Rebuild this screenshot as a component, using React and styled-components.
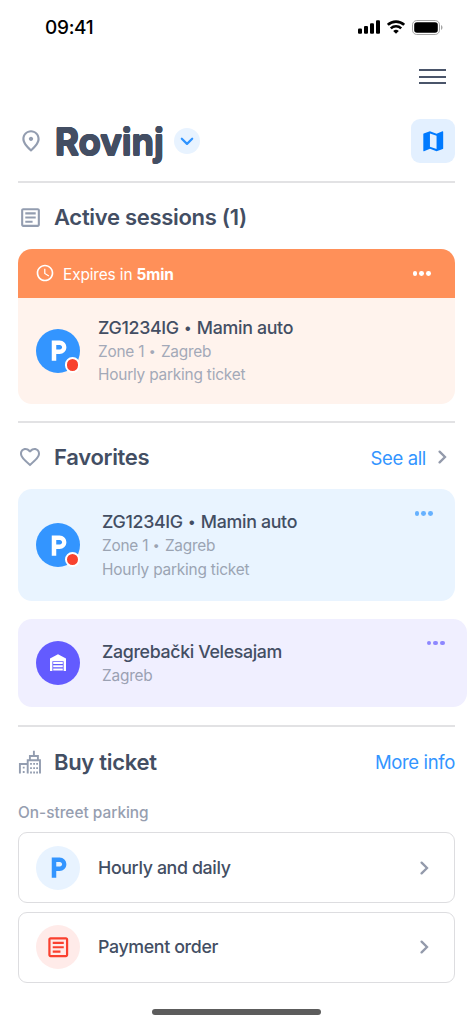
import React from 'react'
import styled, { createGlobalStyle } from 'styled-components'
import {
  MdAccessTime,
  MdFavoriteBorder,
  MdLocalParking,
  MdMap,
  MdOutlineArticle,
  MdOutlinePlace
} from 'react-icons/md'

const GlobalStyle = createGlobalStyle`
  * {
    box-sizing: border-box;
  }
  body {
    margin: 0;
    background: #fff;
    font-family: Inter, 'Liberation Sans', sans-serif;
    color: #434e63;
  }
  svg {
    display: block;
    flex: none;
  }
`

const Screen = styled.div`
  width: 473px;
  height: 1024px;
  padding: 0 18px;
  overflow: hidden;
  display: flex;
  flex-direction: column;
  background: #fff;
`

const StatusBar = styled.div`
  height: 54px;
  padding: 0 12px 0 27px;
  display: flex;
  align-items: center;
  justify-content: space-between;
  color: #000;
`

const StatusIcons = styled.div`
  display: flex;
  align-items: center;
  gap: 7px;
`

const Label = styled.span`
  padding-top: ${(props) => props.$drop || 0}px;
  font-size: ${(props) => props.$size}px;
  font-weight: ${(props) => props.$weight || 400};
  line-height: ${(props) => props.$line || 24}px;
  letter-spacing: ${(props) => props.$track || 0}px;
  color: ${(props) => props.$color || '#434e63'};
  white-space: nowrap;
`

const Bullet = styled.i`
  display: inline-block;
  font-style: normal;
  transform: scale(0.8);
`

const MenuRow = styled.div`
  height: 45px;
  padding-right: 9px;
  display: flex;
  align-items: center;
  justify-content: flex-end;
`

const MenuButton = styled.div`
  width: 27px;
  height: 15px;
  display: flex;
  flex-direction: column;
  justify-content: space-between;
`

const MenuLine = styled.i`
  height: 2px;
  background: #4a556a;
`

const CityRow = styled.div`
  height: 44px;
  margin-top: 20px;
  display: flex;
  align-items: center;
`

const IconSlot = styled.div`
  width: 36px;
  color: #939db0;
  display: flex;
  align-items: center;
`

/* the ring of shadows rounds off the letter corners */
const CityName = styled.h1`
  margin: 0 10px 0 1px;
  padding-top: 1px;
  font-size: 36.5px;
  line-height: 44px;
  font-weight: 600;
  letter-spacing: 0.2px;
  text-shadow:
    0.9px 0 #434e63,
    -0.9px 0 #434e63,
    0 0.9px #434e63,
    0 -0.9px #434e63,
    0.65px 0.65px #434e63,
    -0.65px 0.65px #434e63,
    0.65px -0.65px #434e63,
    -0.65px -0.65px #434e63;
`

const Dropdown = styled.div`
  width: 26px;
  height: 26px;
  border-radius: 50%;
  background: #e8f3ff;
  color: #2e93ff;
  display: flex;
  align-items: center;
  justify-content: center;
`

const MapButton = styled.div`
  width: 44px;
  height: 44px;
  margin-left: auto;
  border-radius: 9px;
  background: #e3f0ff;
  color: #007aff;
  display: flex;
  align-items: center;
  justify-content: center;
`

const Divider = styled.div`
  flex: none;
  height: 2px;
  margin-top: ${(props) => props.$top}px;
  background: #e2e2e4;
`

const SectionHead = styled.div`
  height: ${(props) => props.$height}px;
  padding-top: ${(props) => props.$drop || 0}px;
  display: flex;
  align-items: center;
`

const HeadLink = styled.div`
  margin-left: auto;
  padding-right: ${(props) => props.$inset || 0}px;
  display: flex;
  align-items: center;
  gap: 12px;
  color: #939aab;
`

const Card = styled.div`
  flex: none;
  width: ${(props) => props.$width || 437}px;
  height: ${(props) => props.$height}px;
  margin-bottom: ${(props) => props.$bottom || 0}px;
  border-radius: 14px;
  overflow: hidden;
  background: ${(props) => props.$tint};
`

const ExpiryBar = styled.div`
  height: 48.5px;
  padding: 0 24px 0 17px;
  display: flex;
  align-items: center;
  gap: 8px;
  background: #ff9059;
  color: #fff;
`

const CardBody = styled.div`
  height: ${(props) => props.$height}px;
  padding: 0 22px 0 18px;
  display: flex;
  align-items: center;
  gap: ${(props) => props.$gap}px;
`

const CardText = styled.div`
  display: flex;
  flex-direction: column;
`

const Dots = styled.div`
  margin-left: auto;
  margin-top: ${(props) => props.$top || 0}px;
  align-self: ${(props) => (props.$top ? 'flex-start' : 'center')};
  display: flex;
  gap: 2px;
  color: ${(props) => props.$color};
`

const Dot = styled.i`
  width: 4.8px;
  height: 4.8px;
  border-radius: 50%;
  background: currentColor;
`

const Avatar = styled.div`
  position: relative;
  flex: none;
  width: 44px;
  height: 44px;
  border-radius: 50%;
  background: ${(props) => props.$fill};
  color: ${(props) => props.$color || '#fff'};
  display: flex;
  align-items: center;
  justify-content: center;
`

const Badge = styled.i`
  position: absolute;
  right: 0;
  bottom: 0;
  width: 15.5px;
  height: 15.5px;
  border: 2px solid #fff;
  border-radius: 50%;
  background: #f8432f;
`

const GroupLabel = styled.div`
  height: 36px;
  padding-bottom: 3px;
  display: flex;
  align-items: center;
`

const TicketOption = styled.div`
  flex: none;
  height: 71px;
  margin-bottom: 8.5px;
  padding: 0 25px 0 17px;
  border: 1px solid #dddde0;
  border-radius: 9px;
  display: flex;
  align-items: center;
  gap: 18px;
  color: #939aab;
`

const Push = styled.div`
  margin-left: auto;
`

const HomeIndicator = styled.div`
  flex: none;
  width: 169px;
  height: 5.5px;
  margin: 18px auto 0;
  border-radius: 3px;
  background: #5c5c5c;
`

const SignalIcon = () => (
  <svg width="22" height="14" viewBox="0 0 22 14">
    <rect x="0" y="8.6" width="4" height="5.2" rx="1.1" />
    <rect x="6" y="6" width="4" height="7.8" rx="1.1" />
    <rect x="12" y="3.2" width="4" height="10.6" rx="1.1" />
    <rect x="18" y="0.2" width="4" height="13.6" rx="1.1" />
  </svg>
)

const WifiIcon = () => (
  <svg width="18" height="14" viewBox="0 0 18 14" fill="none" stroke="#000">
    <path d="M.8 4.9a11.8 11.8 0 0 1 16.4 0" strokeWidth="2.7" />
    <path d="M3.8 8.3a7.5 7.5 0 0 1 10.4 0" strokeWidth="2.5" />
    <path d="M9 13.8 6.2 11a4 4 0 0 1 5.6 0z" fill="#000" stroke="none" />
  </svg>
)

const BatteryIcon = () => (
  <svg width="31" height="15" viewBox="0 0 31 15">
    <rect x=".5" y=".5" width="27" height="14" rx="4.3" fill="none" stroke="#a5a5a5" />
    <rect x="2.2" y="2.2" width="23.6" height="10.6" rx="2.8" />
    <path d="M29 5v5c.9-.4 1.5-1.4 1.5-2.5S29.9 5.4 29 5z" fill="#a5a5a5" />
  </svg>
)

const ChevronRight = () => (
  <svg width="9" height="14" viewBox="0 0 9 14" fill="none">
    <path
      d="M1.6 1.6 7 7l-5.4 5.4"
      stroke="currentColor"
      strokeWidth="2.3"
      strokeLinecap="round"
    />
  </svg>
)

const ChevronDown = () => (
  <svg width="14" height="9" viewBox="0 0 14 9" fill="none">
    <path
      d="M1.8 1.7 7 6.9l5.2-5.2"
      stroke="currentColor"
      strokeWidth="2.2"
      strokeLinecap="round"
      strokeLinejoin="round"
    />
  </svg>
)

const GarageIcon = () => (
  <svg width="16" height="17" viewBox="0 0 16 17" fill="none">
    <path d="M0 17V4.5L8 .3l8 4.2V17h-2.4V7.2H2.4V17z" fill="currentColor" />
    <path
      d="M3.2 9.1h9.6M3.2 12.3h9.6M3.2 15.6h9.6"
      stroke="currentColor"
      strokeWidth="2"
    />
  </svg>
)

const CityIcon = () => (
  <svg width="23" height="24" viewBox="0 0 23 24" fill="none" stroke="currentColor">
    <path d="M1.9 23.5V14h7.5" strokeWidth="1.9" />
    <path d="M9.7 23.5V10.3H22v13.2" strokeWidth="1.9" />
    <path d="M11.9 10V6h8v4M15.9 6V.8" strokeWidth="1.9" />
    <path
      d="M5.7 16.8v7M13 13v10.8M16.100 13v10.8M19.100 13v10.8"
      strokeWidth="1.8"
      strokeDasharray="1.8 2.5"
    />
  </svg>
)

const MoreDots = (props) => (
  <Dots $color={props.color} $top={props.top}>
    <Dot />
    <Dot />
    <Dot />
  </Dots>
)

const ParkingTicket = (props) => (
  <>
    <Avatar $fill="#3395ff">
      <MdLocalParking size={27} />
      <Badge />
    </Avatar>
    <CardText>
      <Label $size={17.8} $line={25} $weight={450} $track={-0.32}>
        ZG1234IG <Bullet>•</Bullet> Mamin auto
      </Label>
      <Label $size={15.4} $line={23.5} $track={-0.22} $color={props.muted}>
        Zone 1 <Bullet>•</Bullet> Zagreb
      </Label>
      <Label $size={15.4} $line={23.5} $track={-0.2} $color={props.muted}>
        Hourly parking ticket
      </Label>
    </CardText>
  </>
)

const App = () => (
  <>
    <GlobalStyle />
    <Screen>
      <StatusBar>
        <Label $size={19} $drop={2} $weight={500} $track={-0.3} $color="#000">
          09:41
        </Label>
        <StatusIcons>
          <SignalIcon />
          <WifiIcon />
          <BatteryIcon />
        </StatusIcons>
      </StatusBar>
      <MenuRow>
        <MenuButton>
          <MenuLine />
          <MenuLine />
          <MenuLine />
        </MenuButton>
      </MenuRow>

      <CityRow>
        <IconSlot>
          <MdOutlinePlace size={26} />
        </IconSlot>
        <CityName>Rovinj</CityName>
        <Dropdown>
          <ChevronDown />
        </Dropdown>
        <MapButton>
          <MdMap size={26.5} />
        </MapButton>
      </CityRow>

      <Divider $top={18} />
      <SectionHead $height={66} $drop={2}>
        <IconSlot>
          <MdOutlineArticle size={25} />
        </IconSlot>
        <Label $size={22} $weight={600} $track={-0.3}>Active sessions (1)</Label>
      </SectionHead>
      <Card $height={155} $tint="#fff3ed">
        <ExpiryBar>
          <MdAccessTime size={20} />
          <Label $size={15.4} $drop={3} $track={-0.12} $color="#fff">
            Expires in <b>5min</b>
          </Label>
          <MoreDots color="#fff" />
        </ExpiryBar>
        <CardBody $height={106} $gap={18}>
          <ParkingTicket muted="#a3a9b8" />
        </CardBody>
      </Card>

      <Divider $top={17} />
      <SectionHead $height={66} $drop={2}>
        <IconSlot>
          <MdFavoriteBorder size={24} />
        </IconSlot>
        <Label $size={22} $weight={600} $track={-0.3}>Favorites</Label>
        <HeadLink $inset={8}>
          <Label $size={18.5} $drop={1} $track={-0.35} $color="#3395ff">See all</Label>
          <ChevronRight />
        </HeadLink>
      </SectionHead>
      <Card $height={112} $bottom={17.5} $tint="#e9f4ff">
        <CardBody $height={112} $gap={22}>
          <ParkingTicket muted="#9ba4b3" />
          <MoreDots color="#66b1ff" top={22} />
        </CardBody>
      </Card>
      <Card $width={449} $height={88.5} $tint="#f0efff">
        <CardBody $height={88.5} $gap={22}>
          <Avatar $fill="#635bff">
            <GarageIcon />
          </Avatar>
          <CardText>
            <Label $size={17.8} $line={25} $weight={450} $track={-0.36}>
              Zagrebački Velesajam
            </Label>
            <Label $size={15.4} $line={23.5} $track={-0.2} $color="#9ba1b3">
              Zagreb
            </Label>
          </CardText>
          <MoreDots color="#8d87ff" top={22} />
        </CardBody>
      </Card>

      <Divider $top={18} />
      <SectionHead $height={69}>
        <IconSlot>
          <CityIcon />
        </IconSlot>
        <Label $size={22} $weight={600} $track={-0.3}>Buy ticket</Label>
        <HeadLink>
          <Label $size={18.5} $track={-0.35} $color="#3395ff">More info</Label>
        </HeadLink>
      </SectionHead>
      <GroupLabel>
        <Label $size={15.4} $weight={450} $color="#969eb0">On-street parking</Label>
      </GroupLabel>
      <TicketOption>
        <Avatar $fill="#e8f3ff" $color="#3395ff">
          <MdLocalParking size={27} />
        </Avatar>
        <Label $size={17.8} $weight={450} $track={-0.36}>Hourly and daily</Label>
        <Push>
          <ChevronRight />
        </Push>
      </TicketOption>
      <TicketOption>
        <Avatar $fill="#ffebe9" $color="#fa402f">
          <MdOutlineArticle size={26.5} />
        </Avatar>
        <Label $size={17.8} $weight={450} $track={-0.36}>Payment order</Label>
        <Push>
          <ChevronRight />
        </Push>
      </TicketOption>
      <HomeIndicator />
    </Screen>
  </>
)

export default App
